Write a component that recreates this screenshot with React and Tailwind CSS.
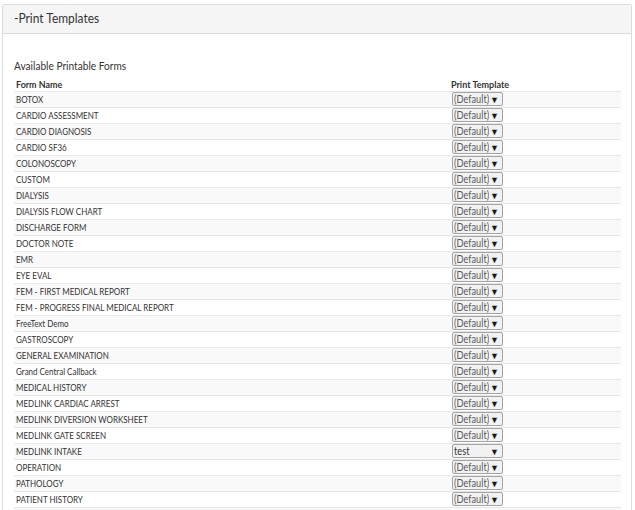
const forms = [
  ["BOTOX", "(Default)"],
  ["CARDIO ASSESSMENT", "(Default)"],
  ["CARDIO DIAGNOSIS", "(Default)"],
  ["CARDIO SF36", "(Default)"],
  ["COLONOSCOPY", "(Default)"],
  ["CUSTOM", "(Default)"],
  ["DIALYSIS", "(Default)"],
  ["DIALYSIS FLOW CHART", "(Default)"],
  ["DISCHARGE FORM", "(Default)"],
  ["DOCTOR NOTE", "(Default)"],
  ["EMR", "(Default)"],
  ["EYE EVAL", "(Default)"],
  ["FEM - FIRST MEDICAL REPORT", "(Default)"],
  ["FEM - PROGRESS FINAL MEDICAL REPORT", "(Default)"],
  ["FreeText Demo", "(Default)"],
  ["GASTROSCOPY", "(Default)"],
  ["GENERAL EXAMINATION", "(Default)"],
  ["Grand Central Callback", "(Default)"],
  ["MEDICAL HISTORY", "(Default)"],
  ["MEDLINK CARDIAC ARREST", "(Default)"],
  ["MEDLINK DIVERSION WORKSHEET", "(Default)"],
  ["MEDLINK GATE SCREEN", "(Default)"],
  ["MEDLINK INTAKE", "test"],
  ["OPERATION", "(Default)"],
  ["PATHOLOGY", "(Default)"],
  ["PATIENT HISTORY", "(Default)"],
];

// narrow face of the original page: squeeze Lato a bit
const Narrow = ({ children, className = "" }) => (
  <span className={"inline-block origin-left scale-x-[0.8] whitespace-nowrap " + className}>
    {children}
  </span>
);

const TemplateSelect = ({ value }) => {
  const isDefault = value === "(Default)";
  return (
    <div className="flex items-center w-[51px] h-[14px] border border-[#a4a4a4] rounded-[2px] bg-[#f2f2f2] pl-[1px] pr-[3px]">
      <span
        className={
          "inline-block w-[34px] origin-left scale-x-[0.88] whitespace-nowrap text-[10.5px] leading-none " +
          (isDefault ? "text-[#5a5a5a]" : "text-[#333]")
        }
      >
        {value}
      </span>
      <span className="ml-auto shrink-0 text-[9px] leading-none text-[#1a1a1a]">▼</span>
    </div>
  );
};

export default function App() {
  return (
    <div
      className="w-[635px] h-[510px] overflow-hidden bg-white pt-[4px] pl-[2px] pr-[3px]"
      style={{ fontFamily: "Lato, 'Open Sans', sans-serif" }}
    >
      <div className="border border-[#dcdcdc] rounded-t-[2px] h-[520px]">
        <div className="h-[29px] bg-[#f5f5f5] border-b border-[#dcdcdc] flex items-center pl-[11px]">
          <span className="inline-block origin-left scale-x-[0.92] text-[13px] text-[#333]">-Print Templates</span>
        </div>
        <div className="pl-[11px] pr-[10px] pt-[25px]">
          <p className="text-[11px] text-[#333] leading-[14px] mb-[5px]">
            <span className="inline-block origin-left scale-x-[0.92]">Available Printable Forms</span>
          </p>
          <table className="w-full border-collapse text-[10px] text-[#333]">
            <thead>
              <tr className="h-[13px]">
                <th className="text-left font-bold pl-[2px] w-[437px] leading-none">
                  <span className="inline-block origin-left scale-x-[0.89]">Form Name</span>
                </th>
                <th className="text-left font-bold pl-0 leading-none">
                  <span className="inline-block origin-left scale-x-[0.9] whitespace-nowrap">Print Template</span>
                </th>
              </tr>
            </thead>
            <tbody>
              {forms.map(([name, tpl], i) => (
                <tr
                  key={name}
                  className={
                    i % 2 === 0
                      ? "h-[16px] border-t border-[#e6e6e6] bg-[#f9f9f9]"
                      : "h-[16px] border-t border-[#e6e6e6] bg-white"
                  }
                >
                  <td className="pl-[2px] leading-none">
                    <Narrow>{name}</Narrow>
                  </td>
                  <td className="pl-[1px]">
                    <TemplateSelect value={tpl} />
                  </td>
                </tr>
              ))}
              <tr className="h-[16px] border-t border-[#e6e6e6] bg-[#f9f9f9]">
                <td colSpan={2}></td>
              </tr>
            </tbody>
          </table>
        </div>
      </div>
    </div>
  );
}
